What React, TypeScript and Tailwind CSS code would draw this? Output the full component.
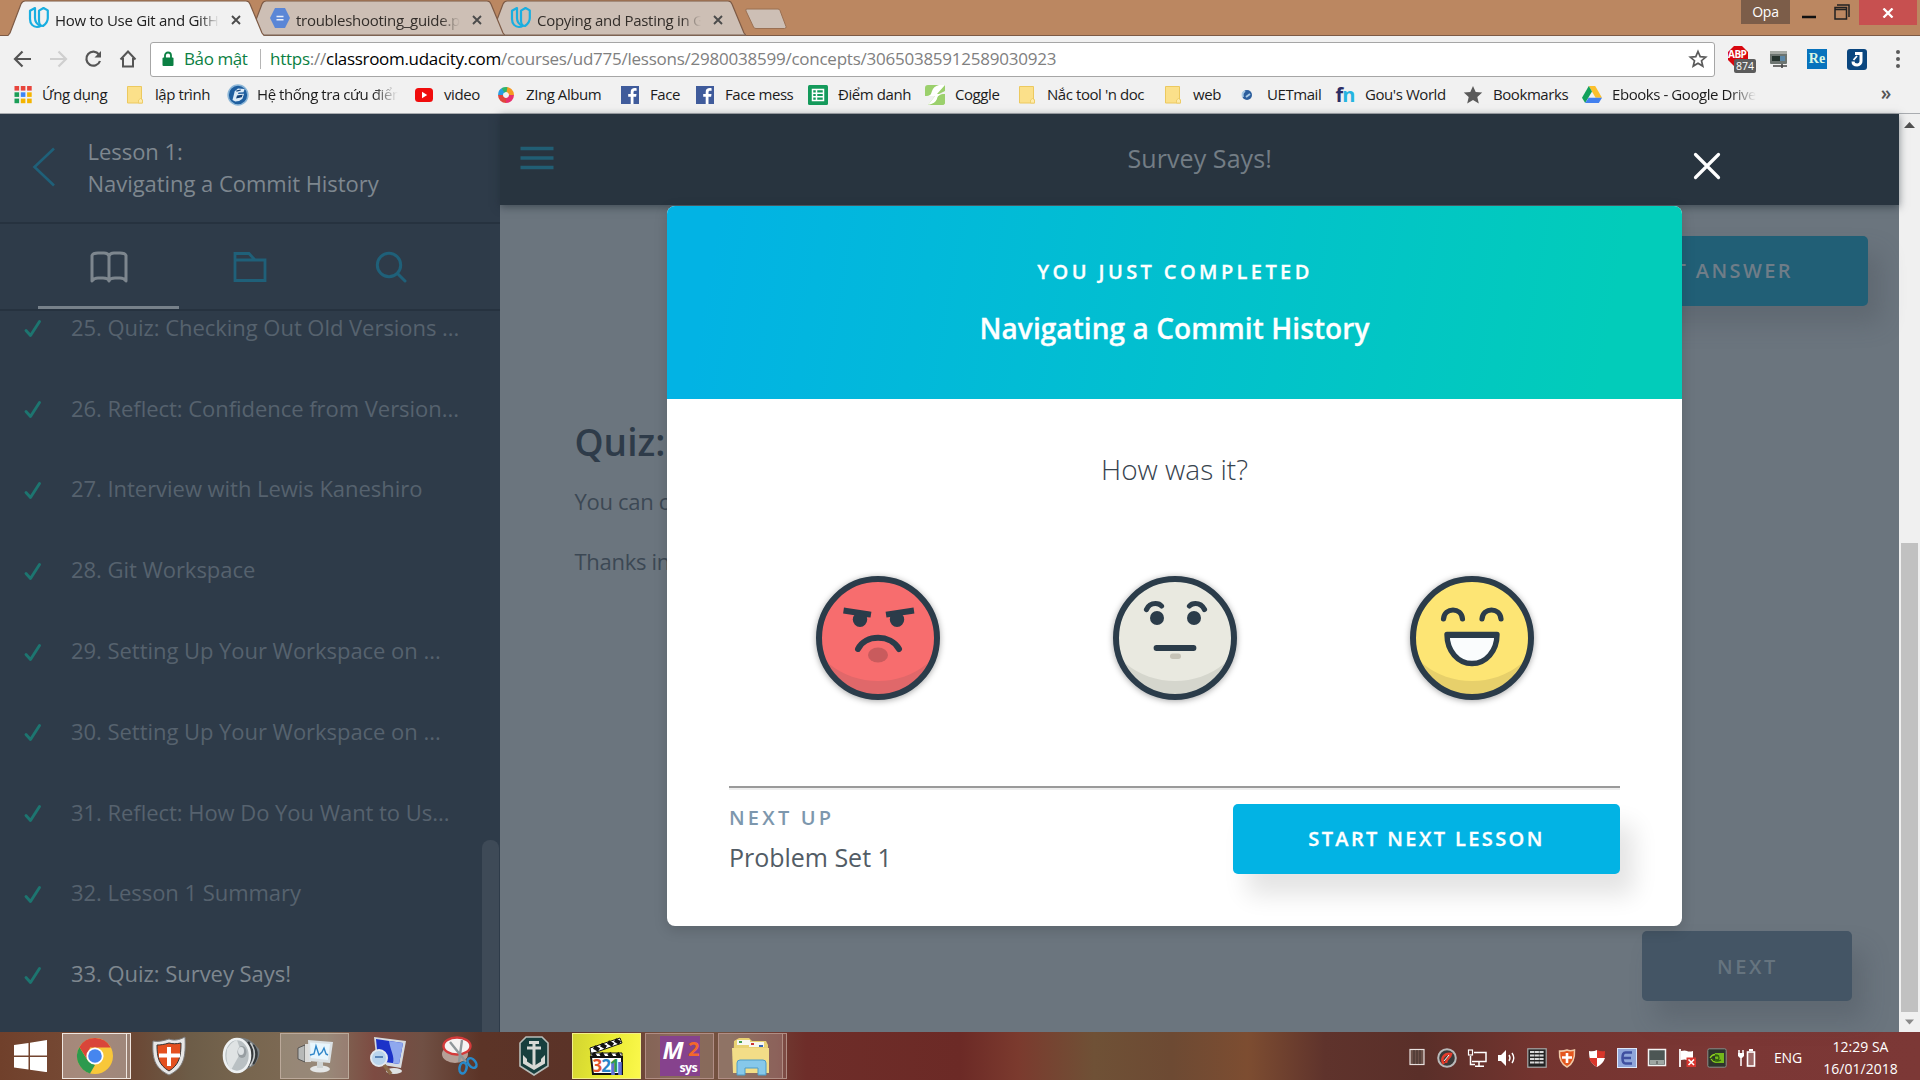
import React from "react";

const UdacityMark = () => (
  <svg width="22" height="24" viewBox="0 0 22 24" fill="none" stroke="#19aee0" strokeWidth="2.2" strokeLinejoin="round">
    <path d="M7 2 2 4.8V13c0 5 3.200 8 7 8 1.500 0 2.800-.4 3.800-1.100C9 18.500 7 15.500 7 12z" />
    <path d="M15.500 2 11 4.600v9.800c0 3.500 2 5.600 4 5.600 2.500-1.800 4.800-4 4.800-8V4.400z" />
  </svg>
);

const DocHex = () => (
  <svg width="22" height="24" viewBox="0 0 22 24">
    <path d="M6 2h10l5 10-5 10H6L1 12z" fill="#5a86d6" />
    <path d="M7.500 10.500h7M7.500 13.700h7" stroke="#e8eefb" strokeWidth="1.600" />
  </svg>
);

function Tab({ title, icon, active, order }: { title: string; icon: React.ReactNode; active?: boolean; order: string }) {
  const fill = active ? "#f1f1f1" : "#cdbfb5";
  return (
    <div className={`relative -ml-[15px] flex h-9 w-[256px] shrink-0 items-center pl-5 ${order}`}>
      <svg className="absolute inset-0" width="256" height="36" viewBox="0 0 256 36">
        <path d="M0 36 2 33 13 4Q14.500 1 17 1H238Q241 1 242 4L254 33 256 36z" fill={fill} />
        <path d="M0 35.500 2 33 13 4Q14.500 1 17 1H238Q241 1 242 4L254 33 256 35.500" fill="none" stroke="#7d5a45" strokeWidth="1.200" />
        {!active && <path d="M2 35.300H256" stroke="#7d6353" strokeWidth="1.400" />}
      </svg>
      <span className="relative">{icon}</span>
      <span
        className={`relative ml-[5px] mt-[3px] w-[164px] overflow-hidden whitespace-nowrap text-[15px] leading-6 tracking-[-0.28px] [mask-image:linear-gradient(to_right,#000_88%,transparent)] ${active ? "text-[#222]" : "text-[#332e2a]"}`}
      >
        {title}
      </span>
      <svg className="relative ml-3 mt-[3px]" width="10" height="10" viewBox="0 0 10 10" stroke="#4b4b4b" strokeWidth="1.900">
        <path d="M1 1l8 8M9 1 1 9" />
      </svg>
    </div>
  );
}

const FolderIcon = () => (
  <svg width="20" height="20" viewBox="0 0 20 20">
    <path d="M2.500 1.500h14v12.500l1 1v3h-15z" fill="#fbe08a" stroke="#ecc95f" strokeWidth="1" />
    <path d="M13.500 18v-3l2-1.500 2 1.500v3z" fill="#fdebad" stroke="#ecc95f" strokeWidth=".8" />
  </svg>
);
const FacebookIcon = () => (
  <svg width="20" height="20" viewBox="0 0 20 20">
    <rect x="1" y="1" width="18" height="18" fill="#3f5b9b" />
    <path d="M13.500 19v-7.300h2.600l.4-2.800h-3V7.300c0-.9.400-1.500 1.600-1.500h1.500V3.200c-3.400-.6-5.900.4-5.900 3.700v2H8.200v2.800h2.500V19z" fill="#fff" />
  </svg>
);
const AppsIcon = () => (
  <svg width="20" height="20" viewBox="0 0 20 20">
    {["#e8453c", "#e8453c", "#e8453c", "#1b9e57", "#3f86f4", "#f4b400", "#1b9e57", "#f4b400", "#f4b400"].map((c, i) => (
      <rect key={i} x={2.500 + (i % 3) * 6.300} y={1 + Math.floor(i / 3) * 6.300} width="4.600" height="4.600" fill={c} />
    ))}
  </svg>
);
const LibraryIcon = () => (
  <svg width="22" height="22" viewBox="0 0 20 20">
    <circle cx="10" cy="10" r="9" fill="#1f5fa0" />
    <circle cx="10" cy="10" r="9" fill="none" stroke="#8db7d8" strokeWidth="1.400" />
    <path d="M5 14.500 7 6.500l3-2.500 6 .5-1 3-4.500.2-.5 1.500 5.500-.3-1.500 4.600-3 2-3.500.4z" fill="#dcebf7" />
    <path d="M9 12.500l4-.8.500-1.400-4 .6zM8.500 6.500l4-1" fill="#123f74" stroke="#123f74" strokeWidth="1" />
  </svg>
);
const YoutubeIcon = () => (
  <svg width="20" height="20" viewBox="0 0 20 20">
    <rect x="1" y="3" width="18" height="14" rx="3.500" fill="#f00c0c" />
    <path d="M8 6.800v6.400l5.200-3.200z" fill="#fff" />
  </svg>
);
const ZingIcon = () => (
  <svg width="20" height="20" viewBox="0 0 20 20" fill="none" strokeWidth="5">
    <path d="M10 4.500a5.500 5.500 0 0 1 5.500 5.500" stroke="#f59a23" />
    <path d="M15.500 10a5.500 5.500 0 0 1-5.500 5.500" stroke="#e8306d" />
    <path d="M10 15.500A5.500 5.500 0 0 1 4.500 10" stroke="#e0453c" />
    <path d="M4.500 10A5.500 5.500 0 0 1 8 4.900" stroke="#2b9de0" />
    <path d="M7 5.400a5.500 5.500 0 0 1 4-.8" stroke="#2fb46a" />
  </svg>
);
const SheetsIcon = () => (
  <svg width="20" height="20" viewBox="0 0 20 20">
    <rect width="20" height="20" rx="1.500" fill="#149a5b" />
    <path d="M4.500 4.500h11v11h-11zM4.500 8.200h11M4.500 11.800h11M8.500 4.500v11" fill="none" stroke="#fff" strokeWidth="1.500" />
  </svg>
);
const CoggleIcon = () => (
  <svg width="20" height="20" viewBox="0 0 20 20">
    <path d="M0 3Q0 0 3 0H20V6L14 9H20V17Q20 20 17 20H3L10 11H0z" fill="#9bd06c" />
    <path d="M0 11c6 0 6-2 7-5s3-5 7-6h6L12 9h8c-6 0-7 2-8 5s-4 5-9 6l7-9z" fill="#fff" />
    <path d="M13 11h7v6q0 3-3 3H7q5-2 6-9z" fill="#9bd06c" />
  </svg>
);
const UetIcon = () => (
  <svg width="20" height="20" viewBox="0 0 20 20">
    <circle cx="10" cy="10" r="5" fill="#2c5f9e" />
    <path d="M6 12a5 5 0 0 1 2-6M9 12l4-3" stroke="#a9cbe6" strokeWidth="2" fill="none" />
  </svg>
);
const FnIcon = () => (
  <span className="flex w-5 justify-center text-[20px] font-bold leading-5 tracking-[-1px] text-[#2b2d66]">
    f<span className="text-[#25b4e0]">n</span>
  </span>
);
const StarIcon = () => (
  <svg width="20" height="20" viewBox="0 0 20 20">
    <path d="m10 1 2.700 6 6.500.6-4.900 4.300 1.500 6.500L10 15l-5.800 3.400 1.500-6.500L.8 7.600 7.300 7z" fill="#5a5a5a" />
  </svg>
);
const DriveIcon = () => (
  <svg width="20" height="20" viewBox="0 0 20 20">
    <path d="M6.800 1h6.400L20 12.700h-6.400z" fill="#fbc02d" />
    <path d="M6.800 1 0 12.700 3.200 18 10 6.500z" fill="#12a15c" />
    <path d="M6.600 12.700H20L16.800 18H3.200z" fill="#4280ef" />
  </svg>
);

const bookmarks: { w: string; label: string; icon: React.ReactNode; fade?: boolean }[] = [
  { w: "w-[113px]", label: "Ứng dụng", icon: <AppsIcon /> },
  { w: "w-[102px]", label: "lập trình", icon: <FolderIcon /> },
  { w: "w-[187px]", label: "Hệ thống tra cứu điểm thi", icon: <LibraryIcon />, fade: true },
  { w: "w-[82px]", label: "video", icon: <YoutubeIcon /> },
  { w: "w-[124px]", label: "ZIng Album", icon: <ZingIcon /> },
  { w: "w-[75px]", label: "Face", icon: <FacebookIcon /> },
  { w: "w-[113px]", label: "Face mess", icon: <FacebookIcon /> },
  { w: "w-[117px]", label: "Điểm danh", icon: <SheetsIcon /> },
  { w: "w-[92px]", label: "Coggle", icon: <CoggleIcon /> },
  { w: "w-[146px]", label: "Nắc tool 'n doc", icon: <FolderIcon /> },
  { w: "w-[74px]", label: "web", icon: <FolderIcon /> },
  { w: "w-[98px]", label: "UETmail", icon: <UetIcon /> },
  { w: "w-[128px]", label: "Gou's World", icon: <FnIcon /> },
  { w: "w-[119px]", label: "Bookmarks", icon: <StarIcon /> },
  { w: "w-[190px]", label: "Ebooks - Google Drive", icon: <DriveIcon />, fade: true },
];

function Browser() {
  return (
    <header className="h-[114px] shrink-0 bg-[#f1f1f1]">
      <div className="flex h-[36px] border-b border-[#7d5a45] bg-[#bb8761]">
        <div className="flex pl-[23px]">
          <Tab title="How to Use Git and GitHub" icon={<UdacityMark />} active order="z-30" />
          <Tab title="troubleshooting_guide.pdf" icon={<DocHex />} order="z-20" />
          <Tab title="Copying and Pasting in Git" icon={<UdacityMark />} order="z-10" />
        </div>
        <svg className="-ml-0.5 mt-2" width="44" height="22" viewBox="0 0 44 22">
          <path d="M3 1h31q1.500 0 2 1.500L42 18.500q.5 2-1.500 2H12q-2 0-2.500-1.500L2 3Q1 1 3 1z" fill="#cdbfb5" stroke="#9a7053" />
        </svg>
        <div className="ml-auto flex items-start pr-[3px]">
          <span className="h-6 w-[49px] bg-[#7c5d49] text-center text-[14px] leading-[23px] tracking-[-0.2px] text-white">Opa</span>
          <svg className="ml-[9px]" width="58" height="24" viewBox="0 0 58 24" fill="none" stroke="#222">
            <path d="M3 17h14" stroke="#111" strokeWidth="2.500" />
            <path d="M36 7.500h11.500V19H36zM36 9.500h11.500" strokeWidth="1.500" />
            <path d="M38 5h12v12" strokeWidth="1.500" />
          </svg>
          <span className="ml-[2px] flex h-[25px] w-[58px] items-center justify-center bg-[#c75050]">
            <svg width="12" height="10" viewBox="0 0 12 10" stroke="#fff" strokeWidth="2.300">
              <path d="M1.500.5l9 9M10.500.5l-9 9" />
            </svg>
          </span>
        </div>
      </div>
      <div className="flex h-[41px] items-center pl-3 pt-[5px]">
        <svg width="128" height="24" viewBox="0 0 128 24" fill="none" stroke="#555" strokeWidth="2.200">
          <path d="M19 12H3M10.500 4.500 3 12l7.500 7.500" />
          <path d="M38 12h16M46.500 4.500 54 12l-7.500 7.500" stroke="#cfcfcf" />
          <path d="M87 7.500A7 7 0 1 0 88 14" />
          <path d="M89 4v6.500H82.500z" fill="#555" stroke="none" />
          <path d="M108.500 12.500 116 4.500l7.500 8M111 11v8.500h10V11" strokeWidth="2" />
        </svg>
        <div className="ml-[10px] flex h-[35px] w-[1565px] items-center rounded-[3px] border border-[#a6a6a6] bg-white text-[17px] tracking-[-0.24px] text-[#808080]">
          <svg className="ml-[11px]" width="12" height="16" viewBox="0 0 12 16">
            <rect x=".5" y="6.500" width="11" height="8.500" rx="1" fill="#0b8043" />
            <path d="M3 7V4.500a3 3 0 0 1 6 0V7" fill="none" stroke="#0b8043" strokeWidth="1.800" />
          </svg>
          <span className="ml-[10px] w-[64px] pb-px tracking-[-0.4px] text-[#0b8043]">Bảo mật</span>
          <span className="ml-3 h-5 w-px bg-[#b5b5b5]" />
          <span className="ml-[9px] whitespace-nowrap pb-px">
            <span className="text-[#0b8043]">https</span>://<span className="text-black tracking-[-0.32px]">classroom.udacity.com</span>
            /courses/ud775/lessons/2980038599/concepts/30650385912589030923
          </span>
          <svg className="ml-auto mr-[6px]" width="20" height="20" viewBox="0 0 20 20">
            <path d="m10 2.500 2.200 5.100 5.500.5-4.200 3.600 1.300 5.400L10 14.200l-4.800 2.900 1.300-5.400-4.200-3.600 5.500-.5z" fill="none" stroke="#5a5a5a" strokeWidth="1.700" />
          </svg>
        </div>
        <div className="flex items-center pl-3">
          <span className="relative h-7 w-[30px]">
            <svg width="22" height="22" viewBox="0 0 22 22">
              <path d="M7 1h8l6 6v8l-6 6H7l-6-6V7z" fill="#d8070f" />
            </svg>
            <span className="absolute left-[1px] top-[4px] text-[10px] font-bold leading-[10px] tracking-[-0.5px] text-white">ABP</span>
            <span className="absolute left-[7px] top-[14px] h-[14px] w-[22px] rounded-[2px] bg-[#5c5c5c] text-center text-[10.500px] leading-[14px] text-white">874</span>
          </span>
          <svg className="ml-3" width="20" height="20" viewBox="0 0 20 20">
            <rect x="1" y="2" width="17" height="13" rx="1" fill="#6c7470" />
            <path d="M1 2h17v3H1z" fill="#a5a9a4" />
            <rect x="3" y="7" width="8" height="5" fill="#25332e" />
            <rect x="11" y="7" width="5" height="5" fill="#5a86a6" />
            <path d="M4 17h14M13 15v4" stroke="#444" strokeWidth="1.600" />
          </svg>
          <span className="ml-[18px] h-5 w-5 bg-[#0873bd] text-center font-['Liberation_Serif'] text-[14px] font-bold leading-5 text-[#d9f7e4]">Re</span>
          <span className="ml-5 flex h-[21px] w-5 items-center justify-center rounded-[3px] bg-[#0a467f]">
            <svg width="16" height="17" viewBox="0 0 16 17" fill="none" stroke="#fff" strokeWidth="3">
              <path d="M6 2.500h6V10a3.800 3.800 0 0 1-3.800 4Q4 14 4 10.500" />
              <path d="m8 5-3.500 4" strokeWidth="1.800" />
            </svg>
          </span>
          <svg className="ml-[28px]" width="6" height="20" viewBox="0 0 6 20" fill="#5a5a5a">
            <circle cx="3" cy="3" r="2" />
            <circle cx="3" cy="10" r="2" />
            <circle cx="3" cy="17" r="2" />
          </svg>
        </div>
      </div>
      <div className="flex h-[37px] items-center border-b border-[#a9acb0] pl-3 text-[15px] tracking-[-0.43px] text-[#1c1c1c]">
        {bookmarks.map((b) => (
          <div key={b.label} className={`flex h-full shrink-0 items-center pb-px ${b.w}`}>
            <span className="flex w-[30px] shrink-0 items-center">{b.icon}</span>
            <span
              className={
                b.fade
                  ? "mr-4 overflow-hidden whitespace-nowrap pb-px [mask-image:linear-gradient(to_right,#000_82%,transparent)]"
                  : "whitespace-nowrap pb-px"
              }
            >
              {b.label}
            </span>
          </div>
        ))}
        <span className="ml-auto mr-[29px] pb-1 text-[19px] font-semibold text-[#555]">»</span>
      </div>
    </header>
  );
}

const lessons = [
  "25. Quiz: Checking Out Old Versions ...",
  "26. Reflect: Confidence from Version...",
  "27. Interview with Lewis Kaneshiro",
  "28. Git Workspace",
  "29. Setting Up Your Workspace on ...",
  "30. Setting Up Your Workspace on ...",
  "31. Reflect: How Do You Want to Us...",
  "32. Lesson 1 Summary",
  "33. Quiz: Survey Says!",
];

function Sidebar() {
  return (
    <aside className="flex w-[500px] shrink-0 flex-col bg-[#2e3b49] text-[22px] tracking-[-0.04px]">
      <div className="flex h-[110px] shrink-0 items-start border-b-2 border-[#26323f]">
        <svg className="ml-8 mt-[33px]" width="24" height="40" viewBox="0 0 24 40" fill="none" stroke="#1f6079" strokeWidth="2.600">
          <path d="M22 1.500 2.500 20 22 38.500" />
        </svg>
        <p className="ml-[31.500px] mt-[21px] leading-8 text-[#7e878f]">
          Lesson 1:
          <br />
          Navigating a Commit History
        </p>
      </div>
      <div className="flex h-[87px] shrink-0 border-b-2 border-[#26323f] pl-[38px]">
        <div className="flex w-[141px] justify-center border-b-[3px] border-[#77818a] pt-[27px]">
          <svg width="38" height="32" viewBox="0 0 38 32" fill="none" stroke="#7d868e" strokeWidth="3" strokeLinejoin="round">
            <path d="M2 30V4.500Q3 2 8 2h6q4 0 5 3 1-3 5-3h6q5 0 6 2.500V30q-2-3-6-3h-5q-5 0-6 3-1-3-6-3H8q-4 0-6 3zM19 5v24" />
          </svg>
        </div>
        <div className="flex w-[141px] justify-center pt-[27px]">
          <svg width="34" height="32" viewBox="0 0 34 32" fill="none" stroke="#1f6079" strokeWidth="2.800">
            <path d="M2 9V2.500h14l6 6.500H32V29.500H2V9H22" />
          </svg>
        </div>
        <div className="flex w-[141px] justify-center pt-[27px]">
          <svg width="32" height="32" viewBox="0 0 32 32" fill="none" stroke="#1f6079" strokeWidth="3" strokeLinecap="round">
            <circle cx="14" cy="14" r="11.700" />
            <path d="m22.500 22.500 7.500 7.500" />
          </svg>
        </div>
      </div>
      <div className="flex min-h-0 flex-1">
        <ul className="flex-1 overflow-hidden">
          {lessons.map((t, i) => (
            <li key={t} className={`flex h-[80.800px] items-center pl-[23px] ${i === 0 ? "-mt-6" : ""} ${i === 8 ? "text-[#7e878f]" : "text-[#56626e]"}`}>
              <svg className="mt-1" width="20" height="20" viewBox="0 0 20 20" fill="none" stroke="#1d7570" strokeWidth="2.900" strokeLinecap="round" strokeLinejoin="round">
                <path d="M3 11.500 7.500 16.500 16.500 2.500" />
              </svg>
              <span className="ml-[28px] whitespace-nowrap">{t}</span>
            </li>
          ))}
        </ul>
        <span className="mr-px mt-[529px] w-[17px] rounded-t-lg bg-[#3e4a57]" />
      </div>
    </aside>
  );
}

function Face({ fill, shade, id, children }: { fill: string; shade: string; id: string; children: React.ReactNode }) {
  return (
    <svg
      className="overflow-visible drop-shadow-[0_1px_3px_rgba(0,0,0,0.35)]"
      width="130"
      height="130"
      viewBox="-65 -65 130 130"
      fill="none"
      stroke="#2b3c4a"
      strokeLinecap="round"
      strokeLinejoin="round"
    >
      <clipPath id={id}>
        <circle r="59" />
      </clipPath>
      <circle r="59" fill={shade} stroke="none" />
      <ellipse cy="-13" rx="68" ry="56" fill={fill} stroke="none" clipPath={`url(#${id})`} />
      <circle r="59" strokeWidth="6" />
      {children}
    </svg>
  );
}

function Modal() {
  return (
    <section className="absolute left-[167px] top-[92px] z-20 flex h-[720px] w-[1015px] flex-col overflow-hidden rounded-lg bg-white shadow-[0_4px_14px_rgba(0,0,0,0.15)]">
      <div className="flex h-[193px] shrink-0 flex-col items-center bg-[linear-gradient(100deg,#02b3e4_5%,#02ccba_92%)] pt-[52px] font-semibold text-white">
        <p className="pl-px text-[20px] leading-[28px] tracking-[3.400px] [-webkit-text-stroke:0.3px_#fff]">YOU JUST COMPLETED</p>
        <h2 className="mt-[22px] text-[28px] leading-[40px] tracking-[0.080px] [-webkit-text-stroke:0.3px_#fff]">Navigating a Commit History</h2>
      </div>
      <p className="mt-[50px] text-center text-[28px] font-light leading-[40px] text-[#37434e]">How was it?</p>
      <div className="mt-[84px] flex justify-center gap-[167px]">
        <Face fill="#f76d6e" shade="#e0686a" id="face-angry">
          <path d="M-31.500-27-10-23.800M33-27 11-23.800" strokeWidth="6" strokeLinecap="square" />
          <ellipse cx="-18" cy="-18.500" rx="7.200" ry="7.500" fill="#2b3c4a" stroke="none" />
          <ellipse cx="19" cy="-18.500" rx="7.200" ry="7.500" fill="#2b3c4a" stroke="none" />
          <ellipse cy="17" rx="10" ry="7.500" fill="#c95b5d" stroke="none" />
          <path d="M-20 11C-13-4 13-4 21 11" strokeWidth="6" />
        </Face>
        <Face fill="#e9e9e0" shade="#d5d6cd" id="face-neutral">
          <path d="M-28.500-28.500q2.500-6 9-6 4 0 6 2.500M29.500-28.500q-3-6-9-6-4 0-6 2.500" strokeWidth="5.200" />
          <circle cx="-18" cy="-20" r="7" fill="#2b3c4a" stroke="none" />
          <circle cx="19" cy="-20" r="7" fill="#2b3c4a" stroke="none" />
          <path d="M-18.500 10h37" strokeWidth="5.800" />
          <rect x="-5" y="15.500" width="11" height="5.500" rx="2.700" fill="#c6c3b7" stroke="none" />
        </Face>
        <Face fill="#fde574" shade="#e7d06b" id="face-happy">
          <path d="M-28.500-19c1-12 18-12 19 0M10-19c1-12 18-12 19 0" strokeWidth="5.200" />
          <path d="M-25-3.500h50C25 13 14 25.500 0 25.500S-25 13-25-3.500z" fill="#fafcfd" strokeWidth="5.400" />
          <path d="M-24-3h48" strokeWidth="6" />
        </Face>
      </div>
      <div className="mx-[62px] mt-[83px] h-1 border-b-2 border-t-2 border-b-[#eee] border-t-[#9a9a9a]" />
      <div className="mx-[62px] mt-[14px] flex justify-between">
        <div>
          <p className="text-[20px] font-semibold leading-[28px] tracking-[3.200px] text-[#7d97ad]">NEXT UP</p>
          <p className="mt-[5px] text-[25px] leading-[40px] tracking-[-0.020px] text-[#525c65]">Problem Set 1</p>
        </div>
        <button className="h-[70px] w-[387px] rounded-[5px] bg-[#02b3e4] text-[20px] font-semibold tracking-[2.380px] text-white shadow-[14px_21px_25px_0_rgba(0,0,0,0.11)] [-webkit-text-stroke:0.3px_#fff]">
          START NEXT LESSON
        </button>
      </div>
    </section>
  );
}

function Lesson() {
  return (
    <main className="relative flex min-w-0 flex-1 flex-col bg-[#6b757e]">
      <div className="relative z-10 flex h-[91px] shrink-0 items-center bg-[#28343f] shadow-[0_2px_8px_rgba(30,40,50,0.55)]">
        <svg className="-mt-[4px] ml-5" width="34" height="24" viewBox="0 0 34 24" stroke="#215e74" strokeWidth="3.600">
          <path d="M.5 2.500h33M.5 12h33M.5 21.500h33" />
        </svg>
        <h1 className="ml-[573.500px] pb-px text-[25px] tracking-[0.080px] text-[#737d85]">Survey Says!</h1>
        <svg className="ml-auto mr-[178px] mt-[13px]" width="28" height="28" viewBox="0 0 28 28" stroke="#fff" strokeWidth="3.200" strokeLinecap="round">
          <path d="m2.500 2.500 23 23M25.500 2.500l-23 23" />
        </svg>
      </div>
      <div className="mr-[31px] mt-[31px] flex justify-end">
        <span className="flex h-[70px] items-center rounded-[5px] bg-[#215f76] px-[75px] text-[20px] font-semibold tracking-[2.400px] text-[#6f7d88] shadow-[13px_17px_25px_rgba(70,75,85,0.3)]">
          SUBMIT ANSWER
        </span>
      </div>
      <div className="mt-[112px] pl-[74.500px] text-[22px] text-[#3c4854]">
        <h2 className="text-[37px] font-semibold leading-[48px] text-[#2e3b49]">Quiz: Survey Says!</h2>
        <p className="mt-[19px] leading-8 tracking-[-0.300px]">You can complete the survey here.</p>
        <p className="mt-7 leading-8 tracking-[-0.300px]">Thanks in advance for your feedback!</p>
      </div>
      <div className="mb-[31px] mr-[47px] mt-auto flex justify-end">
        <span className="flex h-[70px] w-[210px] items-center justify-center rounded-[5px] bg-[#445565] pl-[1px] pt-px text-[20px] font-semibold tracking-[2.600px] text-[#66747f] shadow-[13px_19px_25px_rgba(60,68,78,0.25)]">
          NEXT
        </span>
      </div>
      <Modal />
    </main>
  );
}

function Scrollbar() {
  return (
    <div className="flex w-[21px] shrink-0 flex-col items-center bg-[#f0f0f0]">
      <svg className="mt-2" width="11" height="6" viewBox="0 0 11 6">
        <path d="M0 6 5.500 0 11 6z" fill="#505050" />
      </svg>
      <span className="mt-[415px] h-[469px] w-[17px] bg-[#c1c1c1]" />
      <svg className="mt-[7px]" width="9" height="6" viewBox="0 0 11 6">
        <path d="M0 0h11L5.500 6z" fill="#8a8a8a" />
      </svg>
    </div>
  );
}

const ChromeIcon = () => (
  <svg width="38" height="38" viewBox="0 0 38 38">
    <circle cx="19" cy="19" r="18" fill="#f8c73a" />
    <path d="M3.400 10 12 24l7 4-5 8.400A18 18 0 0 1 3.400 10z" fill="#2c9a4e" />
    <path d="M14 10.500h20.800A18 18 0 0 0 3.400 10l7.600 12z" fill="#d9453a" />
    <circle cx="19" cy="19" r="8.600" fill="#fff" />
    <circle cx="19" cy="19" r="6.800" fill="#4686ef" />
  </svg>
);
const ShieldIcon = () => (
  <svg width="36" height="40" viewBox="0 0 36 40">
    <path d="M18 3C12 5 7 6 2 5c-1 16 1 27 16 34C33 32 35 21 34 1 28 4 23 5 18 3z" fill="#e7e7e7" stroke="#7b7b7b" />
    <path d="M18 7c-5 1.500-8 2-12 2 0 13 2 20 12 26C28 29 30 21 30 7c-5 1-8 1-12 0z" fill="#e4501f" stroke="#333" />
    <path d="M18 11v19M8 19.500h21" stroke="#fff" strokeWidth="4" />
  </svg>
);
const SpeakerIcon = () => (
  <svg width="40" height="38" viewBox="0 0 40 38">
    <path d="M16 1c9-1 14 3 21 11 2 5-2 14-6 17L17 36z" fill="#777d80" />
    <path d="M26 5q9 11-1 25M31 8q7 9 0 19" stroke="#35393b" strokeWidth="2.400" fill="none" />
    <path d="M28.500 6q8 11-.5 23" stroke="#c8cccd" strokeWidth="1.400" fill="none" />
    <ellipse cx="15" cy="18.500" rx="13" ry="16.500" fill="#b9c0c3" stroke="#eef1f2" strokeWidth="2.600" />
    <path d="M5 12q5-8 10-9l4 12-10 18q-6-7-4-21z" fill="#dfe3e4" />
    <ellipse cx="20" cy="15" rx="4.500" ry="6" fill="#979ea2" />
    <ellipse cx="19" cy="14" rx="3" ry="4" fill="#dde2e4" />
  </svg>
);
const PerfIcon = () => (
  <svg width="38" height="36" viewBox="0 0 38 36">
    <path d="M2 10 9 7v17l-7-3z" fill="#b7b9b8" stroke="#454545" strokeWidth=".8" />
    <path d="M9 6h6v18H9z" fill="#dcdcda" />
    <path d="m12 2 25 2-3 21-21-2z" fill="#dbe1e4" />
    <path d="m14 4.500 20 1.500-2 16-17-2z" fill="#e8f6fd" />
    <path d="m14 17 4-1 2-8 3 9 3-3 2-4 2 6 2 1" fill="none" stroke="#2f86c9" strokeWidth="1.400" />
    <ellipse cx="24" cy="31" rx="10" ry="3.500" fill="#e4e6e6" />
    <path d="M21 24h6v6h-6z" fill="#cfd3d3" />
  </svg>
);
const DiagIcon = () => (
  <svg width="38" height="40" viewBox="0 0 38 40">
    <path d="m5 1 32 4-5 27-24-4z" fill="#d6dbe0" />
    <path d="m7 3 27 4-4 21-21-3z" fill="#1c32c8" />
    <path d="M20 5l14 2-4 21-6-1c2-6-3-14-4-22z" fill="#8fa8ee" />
    <ellipse cx="25" cy="35" rx="8" ry="3" fill="#dfe2e4" />
    <circle cx="10" cy="22" r="8" fill="#b9d4ec" stroke="#e3e9ee" strokeWidth="2" />
    <path d="M6 21h8" stroke="#5b86b8" strokeWidth="2" />
    <path d="m15 29 7 9" stroke="#8a6a48" strokeWidth="3.600" />
  </svg>
);
const SnipIcon = () => (
  <svg width="40" height="40" viewBox="0 0 40 40">
    <ellipse cx="14" cy="18" rx="13" ry="9" fill="#b6a097" />
    <ellipse cx="16" cy="10" rx="13.500" ry="8.500" fill="#f5f3f2" stroke="#d43a3a" strokeWidth="2.400" />
    <path d="m9 6 16 20M21 4l-3 22" stroke="#8f979a" strokeWidth="2.400" />
    <ellipse cx="22" cy="32" rx="3.500" ry="5.500" fill="none" stroke="#2989c9" strokeWidth="2.600" transform="rotate(12 22 32)" />
    <ellipse cx="31" cy="27" rx="3.500" ry="5.500" fill="none" stroke="#2989c9" strokeWidth="2.600" transform="rotate(-40 31 27)" />
  </svg>
);
const AnchorIcon = () => (
  <svg width="34" height="40" viewBox="0 0 34 40">
    <path d="M9 1h16l6 6v23L17 39 3 30V7z" fill="#173f3e" stroke="#b9bdb9" strokeWidth="1.600" />
    <path d="M17 7v24M10 12h14M12 6.500h10" fill="none" stroke="#d7d9d5" strokeWidth="3" />
    <path d="M6 19v8.500L17 34l11-6.500V19l-4 4v2.500l-7 4.500-7-4.500V23z" fill="#d7d9d5" />
  </svg>
);
const ClapperIcon = () => (
  <span className="relative h-10 w-[38px]">
    <svg width="38" height="40" viewBox="0 0 38 40">
      <path d="M2 12 32 2l2 5L3 18z" fill="#fff" stroke="#111" />
      <path d="m6 11 5 3M13 8.500l5 3M20 6l5 3M27 4l5 3" stroke="#111" strokeWidth="4" />
      <path d="M3 17h31v5H3z" fill="#fff" stroke="#111" />
      <path d="m5 17 3 5M13 17l3 5M21 17l3 5M29 17l3 5" stroke="#111" strokeWidth="4" />
      <path d="M3 21h31v17H5z" fill="#fff" stroke="#111" strokeWidth="2" />
      <path d="M25 26v13M32 26v13" stroke="#6173d8" strokeWidth="3.600" />
    </svg>
    <span className="absolute left-[5px] top-[20px] flex text-[17px] font-bold leading-5 tracking-[-1px]">
      <span className="text-[#e2552c]">3</span>
      <span className="text-[#2a85c9]">2</span>
      <span className="text-[#2c9a4e]">1</span>
    </span>
  </span>
);
const M2Icon = () => (
  <span className="flex h-10 w-10 flex-col bg-[#86428d] font-bold text-white">
    <span className="flex h-[25px] items-start justify-between pl-[3px]">
      <span className="text-[24px] italic leading-[27px] tracking-[-1px]">M</span>
      <span className="text-[20px] leading-[25px] text-[#f4682a]">2</span>
    </span>
    <span className="pl-[20px] text-[12.500px] leading-[13px] tracking-[-0.600px]">sys</span>
  </span>
);
const ExplorerIcon = () => (
  <svg width="40" height="40" viewBox="0 0 40 40">
    <path d="M3 5 8 2h10l3 3h14l2 4v28H2z" fill="#e9d273" />
    <path d="M6 4h13v5H6zM18 6h15v5H18z" fill="#f7f7ef" />
    <path d="M8 5h3v2H8z" fill="#3f9d4e" />
    <path d="M20 7h3v2h-3z" fill="#c33" />
    <path d="M28 9h4v2h-4z" fill="#3768b8" />
    <path d="M1 12h37v25H2z" fill="#f3dd87" />
    <path d="M6 39V27q0-3 3-3h23q3 0 3 3v12h-8v-7H14v7z" fill="#86c8ea" stroke="#4c9cc8" />
  </svg>
);

const apps: { icon: React.ReactNode; cls: string }[] = [
  { icon: <ShieldIcon />, cls: "border-transparent" },
  { icon: <SpeakerIcon />, cls: "border-transparent" },
  { icon: <PerfIcon />, cls: "border-[#bba99a] bg-white/20" },
  { icon: <DiagIcon />, cls: "border-transparent" },
  { icon: <SnipIcon />, cls: "border-transparent" },
  { icon: <AnchorIcon />, cls: "border-transparent" },
  { icon: <ClapperIcon />, cls: "border-[#f2f08a] bg-[linear-gradient(100deg,#d3d531,#e9eb33_50%,#fbf84c)]" },
  { icon: <M2Icon />, cls: "border-[#b08d84] bg-white/15" },
];

const Tray = ({ children }: { children: React.ReactNode }) => (
  <span className="flex w-[30px] justify-center">
    <svg width="20" height="20" viewBox="0 0 20 20" fill="none">
      {children}
    </svg>
  </span>
);

function Taskbar() {
  return (
    <footer className="flex h-12 shrink-0 items-center bg-[linear-gradient(90deg,#70402b_0%,#764a35_4%,#6b4835_7%,#6d5d48_10%,#78664f_13%,#806c58_17%,#7d4b42_19.500%,#705044_22%,#5c3427_25%,#5b3328_30%,#76503f_35%,#73513f_38%,#6e2d29_42%,#6c2a26_50%,#7b3a2e_53%,#6f5136_57%,#6d4a33_61%,#7d4d31_65%,#5f332c_69%,#5a2f29_74%,#74342f_80%,#7b3735_90%,#7c3836_100%)]">
      <svg className="ml-[14px]" width="33" height="32" viewBox="0 0 33 32" fill="#fff">
        <path d="M0 5 14.500 3v12.500H0zM16 2.700 33 0v15.500H16zM0 17h14.500v12.500L0 27.500zM16 17h17v15.200l-17-2.500z" />
      </svg>
      <span className="ml-[15px] flex h-[46px] w-[65px] items-center justify-center border border-[#efe6e0] bg-white/35">
        <ChromeIcon />
      </span>
      <span className="h-[46px] w-[4px] border border-l-0 border-[#efe6e0] bg-white/30" />
      <div className="ml-[3px] flex gap-1">
        {apps.map((a, i) => (
          <span key={i} className={`flex h-[46px] w-[69px] items-center justify-center border ${a.cls}`}>
            {a.icon}
          </span>
        ))}
      </div>
      <span className="ml-1 flex h-[46px] w-[65px] items-center justify-center border border-[#b08d84] bg-white/20">
        <ExplorerIcon />
      </span>
      <span className="h-[46px] w-[4px] border border-l-0 border-[#b08d84] bg-white/10" />
      <div className="ml-auto flex items-center pt-[3px] text-[14px] text-white">
        <Tray>
          <rect x="3" y="1.500" width="14" height="15" fill="#6b5048" stroke="#e8e0de" strokeWidth="1.200" />
          <path d="M7 2v14M10 2v14M13 2v14" stroke="#3f2f2b" />
        </Tray>
        <Tray>
          <circle cx="10" cy="10" r="8.800" fill="#3a3a3a" stroke="#b9b9b9" strokeWidth="2" />
          <path d="M7 16c-4-5 0-11 7-10-1 5-5 4-5 9" stroke="#e33c2c" strokeWidth="2.600" />
          <path d="m7 13 5-6" stroke="#fff" />
        </Tray>
        <Tray>
          <path d="M7 4.500h12v9H5M12 13.500V18M8 18.200h9M3.500 8v8.500H8" stroke="#fff" strokeWidth="1.500" />
          <rect x="1.500" y="2" width="4" height="5" stroke="#fff" strokeWidth="1.200" />
        </Tray>
        <Tray>
          <path d="M1 7h3l5-5v16l-5-5H1z" fill="#fff" />
          <path d="M12 7q2 3 0 6M15 5q3.500 5 0 10" stroke="#fff" strokeWidth="1.400" />
        </Tray>
        <Tray>
          <rect x=".8" y=".8" width="18.400" height="18.400" fill="#222" stroke="#aaa" strokeWidth="1.200" />
          <path d="M3 4h14M3 7.500h14M3 11h14M3 14.500h14" stroke="#d8d8d8" strokeWidth="2.200" strokeDasharray="4.200 .5" />
        </Tray>
        <Tray>
          <path d="M10 2Q6 3.500 2.500 3C2 11 4 16 10 19c6-3 8-8 7.500-17Q13 3.500 10 2z" fill="#e4571f" stroke="#f0c9a8" strokeWidth="1.500" />
          <path d="M10 5v10M5 9.500h10" stroke="#fff" strokeWidth="2.600" />
        </Tray>
        <Tray>
          <path d="M10 2Q6 4 2 3c0 8 2 13 8 16z" fill="#fff" />
          <path d="M10 2q4 2 8 1c0 8-2 13-8 16z" fill="#d9362b" />
          <path d="M2 10h8v9q-6-3-8-9z" fill="#d9362b" />
          <path d="M10 10h8q-2 6-8 9z" fill="#fff" />
        </Tray>
        <Tray>
          <rect x=".5" y=".5" width="19" height="19" fill="#8fa5da" stroke="#dfe7f8" />
          <path d="M15 4.500H8.500Q5.500 4.500 5.500 10t3 5.500H15M6 10h8" stroke="#3f4fa0" strokeWidth="2.600" />
        </Tray>
        <Tray>
          <rect x="1.500" y="1.500" width="17" height="16" fill="#4c5654" stroke="#f3f3f3" strokeWidth="1.500" />
          <path d="M3 12h14v4.500H3z" fill="#9ea6a3" />
          <path d="M10 13v3" stroke="#444" />
        </Tray>
        <Tray>
          <path d="M3 1v18" stroke="#fff" strokeWidth="1.800" />
          <path d="M4 3q4-1 6 0t6 0v9q-4 1-6 0t-6 0z" fill="#fff" />
          <rect x="9.500" y="9.500" width="9.500" height="9.500" fill="#d8352f" />
          <path d="m11.500 11.500 5.500 5.500M17 11.500 11.500 17" stroke="#fff" strokeWidth="1.600" />
        </Tray>
        <Tray>
          <rect x=".8" y=".8" width="18.400" height="18.400" rx="1.500" fill="#2d332c" stroke="#8b8f8b" />
          <path d="M8 5h9v10H8z" fill="#74b81b" />
          <path d="M3 10q4-5 9-2M5 10q3 5 9 2M8 8q4-1 4 2t-4 1" stroke="#2f5c10" strokeWidth="1.300" />
          <path d="M3 10q2-3.500 5-3.500M4 11q2 3 4 3" stroke="#8fd021" strokeWidth="1.300" />
        </Tray>
        <Tray>
          <rect x="10.500" y="4" width="7" height="14" fill="#fff" fillOpacity=".25" stroke="#fff" strokeWidth="1.600" />
          <path d="M12 2h4" stroke="#fff" strokeWidth="2" />
          <path d="M2 2v4M6 2v4M4 9v9" stroke="#fff" strokeWidth="1.500" />
          <path d="M1 5h6v3L5 10H3L1 8z" fill="#fff" />
        </Tray>
        <span className="ml-[12px] w-[29px] tracking-[-0.200px]">ENG</span>
        <p className="ml-[19px] mr-[21px] w-[77px] text-center leading-[22px]">
          12:29 SA
          <br />
          16/01/2018
        </p>
      </div>
    </footer>
  );
}

export default function App() {
  return (
    <div className="flex h-[1080px] w-[1920px] flex-col overflow-hidden font-['Open_Sans','Noto_Sans',sans-serif]">
      <Browser />
      <div className="flex min-h-0 flex-1">
        <Sidebar />
        <Lesson />
        <Scrollbar />
      </div>
      <Taskbar />
    </div>
  );
}
